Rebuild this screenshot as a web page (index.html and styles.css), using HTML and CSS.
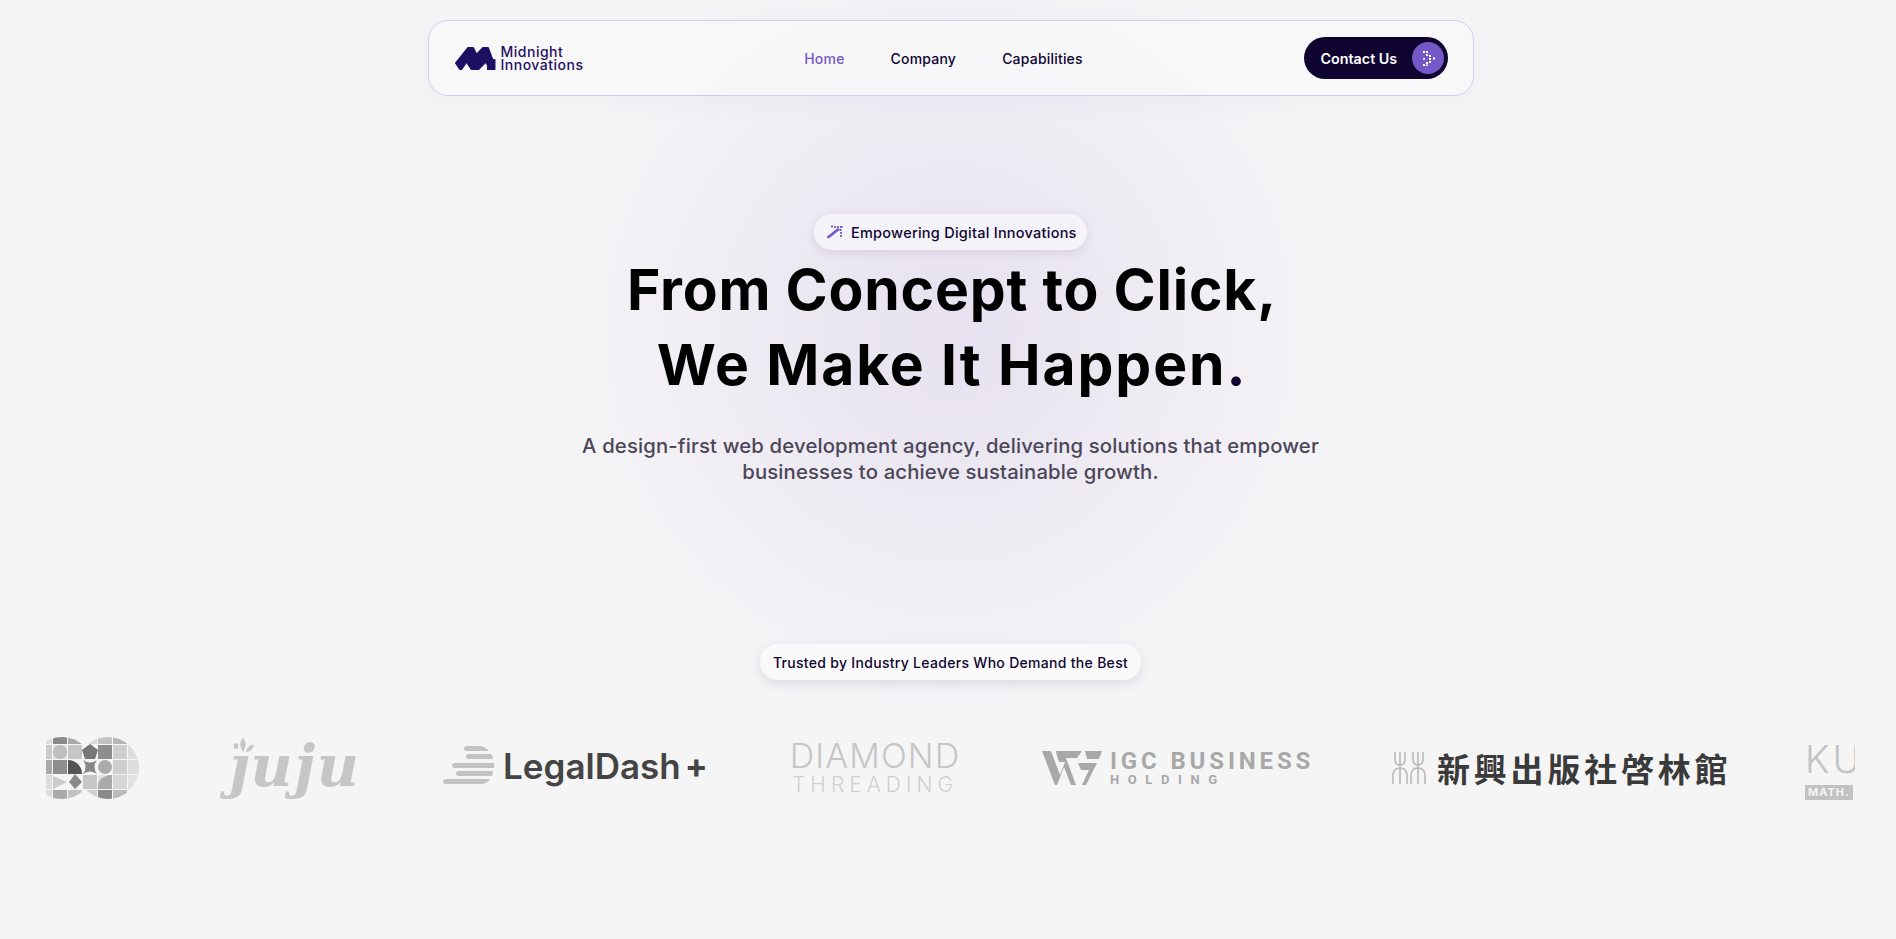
FILE: index.html
```html
<!DOCTYPE html>
<html lang="en">
<head>
<meta charset="utf-8">
<title>Midnight Innovations</title>
<link rel="stylesheet" href="styles.css">
</head>
<body>
<header class="nav">
  <a class="brand" href="#">
    <svg class="brand-mark" viewBox="0 0 42 24" width="42" height="24">
      <path d="M2 17 14 2H19L22.500 9 29 2H34L38.500 14H40.500V23H33V16H31.500L24.500 23H17.500L12.500 15.500 7.500 23H6Z" fill="#1f0f63" stroke="#1f0f63" stroke-width="2" stroke-linejoin="round"/>
      <path d="M29 24 33 18V24Z" fill="#f7f7f9"/>
    </svg>
    <span class="brand-name">Midnight<br>Innovations</span>
  </a>
  <nav class="links">
    <a class="link active" href="#">Home</a>
    <a class="link" href="#">Company</a>
    <a class="link" href="#">Capabilities</a>
  </nav>
  <a class="contact" href="#">
    <span>Contact Us</span>
    <span class="contact-dot">
      <svg viewBox="0 0 32 32" width="32" height="32" fill="#fff">
        <rect x="11" y="9" width="2" height="2"/><rect x="14" y="9" width="2" height="2"/>
        <rect x="14" y="12" width="2" height="2"/><rect x="17" y="13" width="2" height="2"/>
        <rect x="11" y="16" width="2" height="1.6"/><rect x="17" y="16" width="2" height="2"/><rect x="21" y="15.5" width="2" height="2"/>
        <rect x="17" y="19" width="2" height="2"/><rect x="14" y="20" width="2" height="2"/>
        <rect x="11" y="22" width="2" height="2"/><rect x="14" y="22.5" width="2" height="1.5"/>
      </svg>
    </span>
  </a>
</header>

<main class="hero">
  <div class="pill pill-top">
    <svg class="pill-icon" viewBox="0 0 16 14" width="16" height="14">
      <path d="M1.500 12 11 4.500" stroke="#7558c8" stroke-width="2.800" stroke-linecap="round" fill="none"/>
      <g fill="#7558c8">
        <rect x="4" y="0.500" width="2" height="1.800"/><rect x="7" y="1" width="2" height="1.800"/><rect x="10" y="1" width="2" height="1.800"/><rect x="13" y="1" width="2.400" height="2"/>
        <rect x="12.500" y="4" width="2" height="2"/><rect x="13" y="7" width="2" height="1.800"/><rect x="13" y="10" width="2" height="1.800"/>
      </g>
    </svg>
    <span>Empowering Digital Innovations</span>
  </div>
  <h1 class="title">From Concept to Click,<br><span class="title-second">We Make It Happen<span class="dot">.</span></span></h1>
  <p class="lead">A design-first web development agency, delivering solutions that empower<br>businesses to achieve sustainable growth.</p>
  <div class="pill pill-trust">Trusted by Industry Leaders Who Demand the Best</div>
</main>

<section class="strip">
  <div class="logo logo-d">
    <svg viewBox="0 0 93 64" width="93" height="64">
      <defs><clipPath id="dclip"><circle cx="16" cy="32" r="31"/><circle cx="62" cy="32" r="31"/></clipPath></defs>
      <g clip-path="url(#dclip)">
        <rect x="0" y="0" width="6" height="8" fill="#ddd"/><rect x="7" y="0" width="14" height="8" fill="#8a8a8a"/><rect x="22" y="0" width="14" height="8" fill="#aaa"/><rect x="37" y="0" width="14" height="8" fill="#d8d8d8"/><rect x="52" y="0" width="14" height="8" fill="#c2c2c2"/><rect x="67" y="0" width="14" height="8" fill="#b6b6b6"/>
        <rect x="0" y="9" width="6" height="14" fill="#ccc"/><rect x="7" y="9" width="14" height="14" fill="#e2e2e2"/><rect x="22" y="9" width="14" height="14" fill="#c6c6c6"/><rect x="52" y="9" width="14" height="14" fill="#8e8e8e"/><rect x="67" y="9" width="14" height="14" fill="#cfcfcf"/><rect x="82" y="9" width="11" height="14" fill="#ddd"/>
        <rect x="0" y="24" width="6" height="14" fill="#aaa"/><rect x="7" y="24" width="14" height="14" fill="#8e8e8e"/><rect x="67" y="24" width="14" height="14" fill="#cfcfcf"/><rect x="82" y="24" width="11" height="14" fill="#ddd"/>
        <rect x="0" y="39" width="6" height="14" fill="#ddd"/><rect x="37" y="39" width="14" height="14" fill="#c6c6c6"/><rect x="67" y="39" width="14" height="14" fill="#d6d6d6"/><rect x="82" y="39" width="11" height="14" fill="#e2e2e2"/><rect x="52" y="39" width="14" height="14" fill="#e4e4e4"/>
        <rect x="0" y="54" width="6" height="10" fill="#ddd"/><rect x="7" y="54" width="14" height="10" fill="#aaa"/><rect x="22" y="54" width="14" height="10" fill="#c2c2c2"/><rect x="37" y="54" width="14" height="10" fill="#d0d0d0"/><rect x="52" y="54" width="14" height="10" fill="#8a8a8a"/><rect x="67" y="54" width="14" height="10" fill="#bbb"/>
        <circle cx="14" cy="16" r="7" fill="#bdbdbd"/>
        <path d="M22 38V24A14 14 0 0 1 36 38Z" fill="#555"/>
        <path d="M7 40 21 46 7 53Z" fill="#ccc"/>
        <path d="M29 38 36 46 29 53 23 46Z" fill="#888"/>
        <path d="M44 8 52 14 49 23H39L36 14Z" fill="#777"/>
        <path d="M37 24Q44 29 51 24 46 31 51 38 44 33 37 38 42 31 37 24Z" fill="#888"/>
        <circle cx="59" cy="31" r="7" fill="#aaa"/>
        <path d="M52 53V49A14 10 0 0 1 66 39V53Z" fill="#aaa"/>
      </g>
    </svg>
  </div>
  <div class="logo logo-juju">
    <svg class="juju-drops" viewBox="0 0 22 16" width="22" height="16"><g fill="#c6c6c6"><ellipse cx="3" cy="8" rx="2.200" ry="3"/><path d="M10 0C14 4 13 9 10 14 7 9 6 4 10 0Z"/><path d="M21 7C18 6 14 9 13 14 16 14 20 12 21 7Z"/></g></svg>
    <span class="juju-text">ȷuju</span>
  </div>
  <div class="logo logo-legal">
    <svg class="legal-mark" viewBox="0 0 52 40" width="52" height="40"><g fill="#c2c2c2"><path d="M24 0H36Q42 0 46 5H24Q21 5 21 2.500 21 0 24 0Z"/><path d="M26 8H48Q50 10 50 13H26Q23 13 23 10.500 23 8 26 8Z"/><path d="M12 17H51V21 22H12Q9 22 9 19.500 9 17 12 17Z"/><path d="M16 25H50Q50 27 49 30H16Q13 30 13 27.500 13 25 16 25Z"/><path d="M3 33H47Q44 38 37 38H3Q0 38 0 35.500 0 33 3 33Z"/></g></svg>
    <span class="legal-text">LegalDash</span><span class="legal-plus">+</span>
  </div>
  <div class="logo logo-diamond">
    <span class="diamond-a">DIAMOND</span>
    <span class="diamond-b">THREADING</span>
  </div>
  <div class="logo logo-igc">
    <svg class="igc-mark" viewBox="0 0 60 34" width="60" height="34"><g fill="#a8a8a8"><path d="M0 0H9L18 24 23 11H17L15 5 14 0H40L35 7H24L34 34H29L22 16 15 34H13Z"/><path d="M43 0H60L57 8H45Z"/><path d="M36 12H55L44 34H40L47 19H39Z"/></g></svg>
    <div class="igc-text"><span class="igc-a">IGC BUSINESS</span><span class="igc-b">HOLDING</span></div>
  </div>
  <div class="logo logo-cjk">
    <svg class="cjk-mark" viewBox="0 0 34 32" width="34" height="32"><g fill="none" stroke="#b9b9b9" stroke-width="1.600"><path d="M3 0V7Q3 13 8 13 13 13 13 7V0M8 0V32M1 32V24Q1 16 8 16 15 16 15 24V32"/><path d="M21 0V7Q21 13 26 13 31 13 31 7V0M26 0V32M19 32V24Q19 16 26 16 33 16 33 24V32"/></g></svg>
    <span class="cjk-text">新興出版社啓林館</span>
  </div>
  <div class="logo logo-ku">
    <span class="ku-a">KUMON</span>
    <span class="ku-b">MATH.</span>
  </div>
</section>
</body>
</html>
```
FILE: styles.css
```css
* { box-sizing: border-box; }
html { margin: 0; padding: 0; overflow: hidden; height: 939px; }
body {
  margin: 0;
  width: 1901px;
  height: 939px;
  font-family: Inter, "Noto Sans", sans-serif;
  color: #0f0530;
  background-color: #f5f5f6;
  background-image: radial-gradient(circle 410px at 950px 330px, #e7e1f0 0%, #eae6f1 25%, #f0edf4 60%, #f5f5f6 100%);
  padding-top: 20px;
}
a { color: inherit; text-decoration: none; }
svg { flex: none; }

.nav {
  width: 1046px;
  height: 76px;
  margin: 0 auto;
  padding: 0 25px 0 25px;
  display: grid;
  grid-template-columns: 1fr auto 1fr;
  align-items: center;
  border: 1px solid #d3ccf6;
  border-radius: 20px;
  background: rgba(250, 250, 250, 0.72);
  box-shadow: 0 6px 24px rgba(120, 100, 180, 0.05);
}
.brand { display: flex; align-items: center; gap: 5px; }
.brand-mark { display: block; }
.brand-name {
  font-size: 14px;
  line-height: 13px;
  font-weight: 500;
  color: #1f0f63;
  letter-spacing: 0.5px;
}
.links { display: flex; gap: 46px; margin-right: 14px; }
.link { font-size: 14px; font-weight: 500; color: #0f0530; letter-spacing: 0.2px; }
.link.active { color: #7558c8; }
.contact {
  justify-self: end;
  width: 144px;
  height: 42px;
  padding: 0 4px 0 17px;
  display: flex;
  align-items: center;
  justify-content: space-between;
  border-radius: 21px;
  background: #0f0530;
  color: #fff;
  font-size: 14.300px;
  font-weight: 600;
}
.contact-dot {
  width: 32px;
  height: 32px;
  border-radius: 50%;
  background: #7558c8;
}
.contact-dot svg { display: block; }

.hero { display: flex; flex-direction: column; align-items: center; }
.pill {
  display: flex;
  align-items: center;
  height: 36px;
  border-radius: 18px;
  font-weight: 500;
  color: #0f0530;
}
.pill-top {
  margin-top: 118px;
  width: 273px;
  padding-left: 13px;
  gap: 8px;
  font-size: 14.500px;
  letter-spacing: 0.25px;
  background: rgba(248, 247, 252, 0.75);
  box-shadow: 0 3px 10px rgba(70, 50, 120, 0.12);
}
.pill-icon { display: block; }
.title {
  margin: 2px 0 0;
  padding-left: 3px;
  font-size: 57px;
  line-height: 75px;
  font-weight: 700;
  text-align: center;
  color: #000;
  letter-spacing: 0.8px;
}
.title-second { letter-spacing: 1.900px; }
.dot { color: #0f0530; }
.lead {
  margin: 31px 0 0;
  font-size: 20.300px;
  line-height: 26px;
  font-weight: 500;
  letter-spacing: 0.15px;
  text-align: center;
  color: #4b4658;
}
.pill-trust {
  margin-top: 159px;
  width: 381px;
  justify-content: center;
  font-size: 14px;
  letter-spacing: 0.3px;
  background: #fafafb;
  box-shadow: 0 4px 12px rgba(60, 50, 90, 0.12);
}

.strip {
  margin: 56px 46px 0;
  height: 64px;
  display: flex;
  gap: 82px;
  overflow: hidden;
  align-items: center;
}
.logo { flex: none; height: 64px; }
.logo-d { width: 93px; }
.logo-d svg { display: block; }

.logo-juju { width: 140px; position: relative; }
.juju-drops { position: absolute; left: 12px; top: 2px; }
.juju-text {
  display: block;
  margin-left: 7px;
  font-family: "DejaVu Serif", serif;
  font-style: italic;
  font-weight: 700;
  font-size: 58px;
  line-height: 60px;
  color: #c6c6c6;
  letter-spacing: 1.500px;
}

.logo-legal { width: 265px; display: flex; align-items: center; padding-bottom: 5px; }
.legal-mark { display: block; margin-right: 8px; }
.legal-text { font-size: 35px; font-weight: 600; color: #444; }
.legal-plus { font-size: 34px; font-weight: 700; color: #444; margin-left: 4px; }

.logo-diamond { width: 170px; display: flex; flex-direction: column; align-items: center; padding-top: 3px; color: #c6c6c6; }
.diamond-a { font-size: 34px; line-height: 34px; font-weight: 300; letter-spacing: 1.100px; }
.diamond-b { margin-top: 1px; font-size: 21px; line-height: 22px; font-weight: 300; letter-spacing: 5px; color: #d0d0d0; }

.logo-igc { width: 268px; display: flex; align-items: center; gap: 8px; }
.igc-mark { display: block; }
.igc-text { display: flex; flex-direction: column; color: #a8a8a8; font-family: Roboto, sans-serif; font-weight: 700; }
.igc-a { font-size: 24px; line-height: 24px; letter-spacing: 3.850px; white-space: nowrap; }
.igc-b { font-size: 13px; line-height: 14px; letter-spacing: 8.600px; white-space: nowrap; }

.logo-cjk { width: 331px; display: flex; align-items: center; gap: 11px; }
.cjk-mark { display: block; }
.cjk-text {
  font-family: "Noto Sans CJK TC", "Noto Sans CJK SC", sans-serif;
  font-size: 33px;
  font-weight: 700;
  color: #3a3a3a;
  letter-spacing: 3.800px;
  white-space: nowrap;
}

.logo-ku { width: 120px; display: flex; flex-direction: column; align-items: flex-start; padding-top: 3px; }
.ku-a { font-size: 38px; line-height: 40px; font-weight: 300; color: #c2c2c2; letter-spacing: 3px; white-space: nowrap; }
.ku-b { margin-top: 6px; padding: 0 3px; height: 15px; font-size: 11px; line-height: 15px; font-weight: 700; background: #c2c2c2; color: #f5f5f5; letter-spacing: 1px; }
```
